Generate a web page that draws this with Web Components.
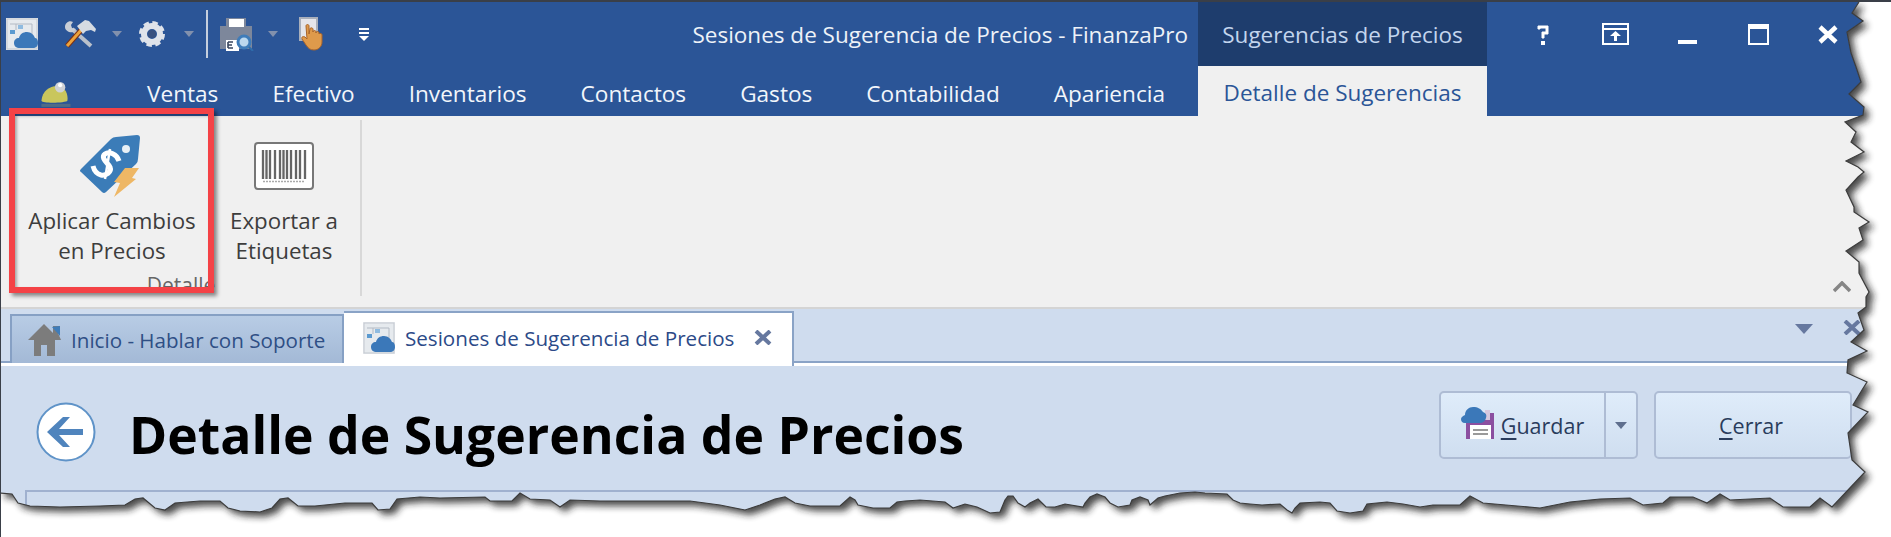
<!DOCTYPE html>
<html lang="es">
<head>
<meta charset="utf-8">
<title>Detalle de Sugerencia de Precios</title>
<style>
  html, body { margin: 0; height: 100%; background: #fff; overflow: hidden; }
  body { font-family: "Open Sans", "Liberation Sans", sans-serif; }
  #page { position: relative; width: 1891px; height: 537px; overflow: hidden; display: flex; flex-direction: column; border-left: 1px solid #3a3f48; border-top: 2px solid #3a3f48; box-sizing: border-box; }
</style>
</head>
<body>
<div id="page">
  <title-bar></title-bar>
  <ribbon-panel>
    <ribbon-button icon="tag" style="width:190px">Aplicar Cambios<br>en Precios</ribbon-button>
    <ribbon-button icon="barcode" style="width:130px">Exportar a<br>Etiquetas</ribbon-button>
  </ribbon-panel>
  <doc-tabs></doc-tabs>
  <detail-header heading="Detalle de Sugerencia de Precios"></detail-header>
  <callout-frame></callout-frame>
  <torn-edge></torn-edge>
</div>

<script>
// inline icons, shared by the components below
const CLOUD = `<path d="M14 30c-4 0-6-2-6-5s2-5 5-5c1-4 4-6 8-6s7 3 8 6c2 0 3 2 3 5s-2 5-5 5z" fill="#3b78b9"/>`;
const APP_ICON = `<svg width="32" height="32" viewBox="0 0 32 32">
  <rect width="32" height="32" fill="#e6eaee"/><rect x="1" y="1" width="30" height="30" fill="none" stroke="#c3c8cf"/>
  <path d="M4 6h22v12M10 6v6" fill="none" stroke="#b3bac4"/>
  <rect x="4" y="12" width="5" height="4" fill="#5b9ad0"/><rect x="12" y="7" width="5" height="4" fill="#8fbbe0"/>
  ${CLOUD}</svg>`;

const ICONS = {
  app: APP_ICON,
  tools: `<svg width="32" height="28" viewBox="0 0 32 28">
    <path d="M8 9 27 26" stroke="#b9c0cb" stroke-width="4"/>
    <path d="M9 2C5 0 1 3 1 7c0 4 5 6 8 5l3-3-4-1-1-3z" fill="#c9ced6"/>
    <path d="M3 26 19 8" stroke="#7a2f16" stroke-width="5"/><path d="M3 26 19 8" stroke="#eda33b" stroke-width="3"/>
    <path d="M13 6 21 0l4 1 7 8-1 3-4-2-5 1-3 3z" fill="#d6dbe2"/></svg>`,
  gear: `<svg width="28" height="28" viewBox="0 0 28 28">
    <circle cx="14" cy="14" r="10.5" fill="none" stroke="#dfe3ea" stroke-width="5" stroke-dasharray="5 3.25"/>
    <circle cx="14" cy="14" r="8" fill="none" stroke="#dfe3ea" stroke-width="6"/>
    <circle cx="14" cy="14" r="4" fill="#39517f"/></svg>`,
  printer: `<svg width="34" height="34" viewBox="0 0 34 34">
    <rect y="9" width="32" height="23" fill="#7d879b"/><rect x="6" y="1" width="20" height="12" fill="#7d879b"/>
    <rect x="9" y="2" width="15" height="8" fill="#fff"/>
    <rect x="6" y="23" width="13" height="11" fill="#fff"/>
    <path d="M8 25h5M8 28h4M8 31h5M8 25v6" stroke="#39465e" stroke-width="1.6" fill="none"/>
    <circle cx="24" cy="25" r="6" fill="#bcd8ee" stroke="#3f7cb9" stroke-width="3"/><path d="m29 30 4 4" stroke="#2f6cab" stroke-width="2"/></svg>`,
  hand: `<svg width="28" height="34" viewBox="0 0 28 34">
    <rect x="1" y="1" width="17" height="22" fill="#e5e5ea" stroke="#a9afbb" stroke-width="2"/>
    <path d="M7 9c0-2 3-2 3 0v8l1-5c0-2 3-1 3 0v3c0-2 3-2 3 0v1c0-2 3-2 3 0v1c0-1 3-1 3 1v7c0 4-3 8-8 8-4 0-6-2-8-5l-4-6c-1-2 1-3 3-2l2 2z" fill="#df9a4b" stroke="#a9642a"/></svg>`,
  ball: `<svg width="34" height="27" viewBox="0 0 32 26">
    <path d="M1 19C2 9 10 4 18 5c6 1 9 8 8 14-1 2-24 3-25 0z" fill="#c9c65c"/>
    <rect x="1" y="22" width="28" height="3" fill="#6f7d7a" opacity=".55"/>
    <circle cx="19" cy="6" r="5" fill="#cfd2d6"/><circle cx="19" cy="4" r="2" fill="#fff"/></svg>`,
  tag: `<svg width="80" height="80" viewBox="-5 6 80 80">
    <path d="M4 49 34 19q2-2 5-2l21-2q3 0 3 3l-2 21q0 3-2 5L29 72q-2 2-4 0L4 52q-2-1 0-3z" fill="#3b7cb8"/>
    <circle cx="49" cy="29" r="4" fill="#e8f0f6"/>
    <path d="M42 41C40 34 32 31 28 34 23 38 31 43 33 47 35 52 29 56 24 55 20 54 17 50 16 46" fill="none" stroke="#fff" stroke-width="5"/>
    <path d="M33 29 28 59" stroke="#fff" stroke-width="2.500"/>
    <path d="M48 48h14l-7 10 4 1-22 18 6-14-6-1z" fill="#eeb765"/></svg>`,
  barcode: `<svg width="60" height="48" viewBox="0 0 60 48">
    <rect x="1" y="1" width="58" height="46" rx="3" fill="#fff" stroke="#777" stroke-width="2"/>
    <path d="M9 8v29M12.500 8v29M16 8v29M21 8v29M26 8v29M29.500 8v29M33 8v29M37 8v29M42 8v29M46 8v29M51 8v29" stroke="#666" stroke-width="2.300"/>
    <path d="M9 39.500h42" stroke="#aaa" stroke-width="1.500" stroke-dasharray="2 1"/></svg>`,
  home: `<svg width="33" height="32" viewBox="0 0 33 32">
    <path d="M0 16 16 0l9 9V2h7v7l-2 0 3 7h-6v16h-8V21h-6v11H6V16z" fill="#7c7c7c"/>
    <path d="M24 3l8-1v10z" fill="#3f7cb9"/></svg>`,
  back: `<svg width="60" height="60" viewBox="0 0 60 60">
    <circle cx="30" cy="30" r="28.500" fill="#fff" stroke="#5f93c8" stroke-width="2"/>
    <path d="M27 15 11 30l16 15h7L23 33h24v-6H23l11-12z" fill="#4f84bd"/></svg>`,
  save: `<svg width="34" height="34" viewBox="0 0 34 34">
    <path d="M5 8h28v26H5z" fill="#8b4fa0"/><rect x="9" y="20" width="21" height="14" fill="#fff"/>
    <path d="M12 25h15M12 29h15" stroke="#9a9a9a" stroke-width="2"/>
    <path d="M24 5h5v10h-5z" fill="#d6c7de"/>
    <path d="M4 18c-3 0-4-2-4-4s2-3 4-4c0-5 4-8 8-8 5 0 8 2 10 5 3 1 4 3 3 6s-2 4-5 5z" fill="#3b78b9"/></svg>`
};

class TitleBar extends HTMLElement {
  constructor() {
    super();
    this.attachShadow({ mode: "open" });
  }

  connectedCallback() {
    const tabs = ["Ventas", "Efectivo", "Inventarios", "Contactos", "Gastos", "Contabilidad", "Apariencia"];
    this.shadowRoot.innerHTML = `
      <style>
        :host { display: block; flex: none; height: 114px; background: #2b5597; color: #fff; font-size: 22.5px; }
        .row { display: flex; align-items: center; }
        .top { height: 64px; padding-left: 5px; }
        .top svg { flex: none; }
        .arrow { width: 0; height: 0; border: 5px solid transparent; border-top: 6px solid #8291ad; border-bottom: 0; }
        .sep { width: 2px; height: 48px; background: #c5cfde; }
        .qat { display: flex; flex-direction: column; align-items: center; gap: 2px; width: 12px; }
        .qat i { display: block; width: 10px; height: 2px; background: #fff; }
        .qat b { width: 0; height: 0; border: 5px solid transparent; border-top: 5px solid #fff; border-bottom: 0; }
        .caption { margin-left: auto; margin-right: 10px; white-space: nowrap; color: #eef2f8; }
        .context { width: 289px; height: 64px; background: #1e3d6d; color: #c3d5ee; display: flex; align-items: center; justify-content: center; }
        .win { width: 404px; height: 64px; display: flex; align-items: center; }
        .bottom { height: 50px; padding-left: 39px; }
        .ball { display: flex; margin-right: 73px; margin-top: 6px; }
        .tabs { display: flex; gap: 54px; margin-top: 4px; font-size: 22.6px; color: #f2f6fb; white-space: nowrap; }
        .selected { flex: none; margin-left: auto; margin-right: 404px; width: 289px; height: 50px; padding-top: 3px; box-sizing: border-box; background: #f0f0f0; color: #2b5597; display: flex; align-items: center; justify-content: center; }
      </style>
      <div class="row top">
        ${ICONS.app}
        <span style="margin-left:26px;display:flex">${ICONS.tools}</span>
        <i class="arrow" style="margin-left:16px"></i>
        <span style="margin-left:16px;display:flex">${ICONS.gear}</span>
        <i class="arrow" style="margin-left:18px"></i>
        <i class="sep" style="margin-left:12px"></i>
        <span style="margin-left:12px;display:flex">${ICONS.printer}</span>
        <i class="arrow" style="margin-left:14px"></i>
        <span style="margin-left:21px;display:flex">${ICONS.hand}</span>
        <span class="qat" style="margin-left:31px"><i></i><i></i><b></b></span>
        <span class="caption">Sesiones de Sugerencia de Precios - FinanzaPro</span>
        <span class="context">Sugerencias de Precios</span>
        <span class="win">
          <svg style="margin-left:49px" width="14" height="22" viewBox="0 0 14 22"><path d="M2 6V3h10v8H8v4H6V9h4V5H4v1z" fill="#fff" stroke="#fff"/><rect x="5" y="18" width="4" height="4" fill="#fff"/></svg>
          <svg style="margin-left:52px" width="27" height="22" viewBox="0 0 27 22"><path d="M1 1h25v20H1zM1 6h25" fill="none" stroke="#fff" stroke-width="2"/><path d="M13.500 8 8 13h4v5h3v-5h4z" fill="#fff"/></svg>
          <svg style="margin-left:49px;margin-top:16px" width="19" height="4"><rect width="19" height="4" fill="#fff"/></svg>
          <svg style="margin-left:51px" width="21" height="21" viewBox="0 0 21 21"><path d="M1 1h19v19H1z" fill="none" stroke="#fff" stroke-width="2"/><rect width="21" height="5" fill="#fff"/></svg>
          <svg style="margin-left:49px" width="20" height="19" viewBox="0 0 20 19"><path d="m2 2 16 15M18 2 2 17" stroke="#fff" stroke-width="4.500"/></svg>
        </span>
      </div>
      <div class="row bottom">
        <span class="ball">${ICONS.ball}</span>
        <div class="tabs">${tabs.map((t) => `<span>${t}</span>`).join("")}</div>
        <span class="selected">Detalle de Sugerencias</span>
      </div>
    `;
  }
}

class RibbonButton extends HTMLElement {
  constructor() {
    super();
    this.attachShadow({ mode: "open" });
  }

  connectedCallback() {
    this.shadowRoot.innerHTML = `
      <style>
        :host { display: flex; flex-direction: column; align-items: center; color: #3d3d3d; font-size: 22.3px; line-height: 30px; text-align: center; white-space: nowrap; }
        .icon { height: 80px; display: flex; align-items: center; justify-content: center; }
      </style>
      <div class="icon">${ICONS[this.getAttribute("icon")]}</div>
      <div><slot></slot></div>
    `;
  }
}

class RibbonPanel extends HTMLElement {
  constructor() {
    super();
    this.attachShadow({ mode: "open" });
  }

  connectedCallback() {
    this.shadowRoot.innerHTML = `
      <style>
        :host { display: flex; flex: none; height: 191px; background: #f0f0f0; border-bottom: 2px solid #d4d4d4; box-sizing: content-box; }
        .group { width: 344px; margin: 4px 0 11px 14px; padding-right: 1px; border-right: 2px solid #d8d8d8; display: flex; flex-direction: column; }
        .buttons { display: flex; gap: 12px; padding-left: 2px; flex: 1; margin-top: 6px; }
        .label { text-align: center; padding-right: 12px; color: #666; font-size: 21px; line-height: 22px; }
        .collapse { margin-left: auto; margin-right: 40px; align-self: flex-end; margin-bottom: 14px; }
      </style>
      <div class="group">
        <div class="buttons"><slot></slot></div>
        <div class="label">Detalle</div>
      </div>
      <svg class="collapse" width="18" height="12" viewBox="0 0 18 12"><path d="m1 10 8-8 8 8" fill="none" stroke="#868686" stroke-width="3.500"/></svg>
    `;
  }
}

class DocTabs extends HTMLElement {
  constructor() {
    super();
    this.attachShadow({ mode: "open" });
  }

  connectedCallback() {
    this.shadowRoot.innerHTML = `
      <style>
        :host { display: flex; flex: none; height: 54px; padding-left: 9px; align-items: flex-end; background: #cfdcee; border-bottom: 3px solid #fff; box-shadow: inset 0 -2px 0 #8aa3c6; font-size: 20.6px; }
        .tab { display: flex; align-items: center; box-sizing: border-box; white-space: nowrap; }
        .off { width: 334px; height: 49px; padding-left: 16px; gap: 10px; background: linear-gradient(#b8cce5, #a3b9d6); border: solid #86a0c4; border-width: 2px 2px 0 2px; color: #2f4f85; }
        .on { width: 450px; height: 55px; margin-bottom: -3px; padding: 0 0 4px 19px; gap: 10px; background: #fff; border: solid #8aa3c6; border-width: 2px 2px 0 0; color: #2c4a88; }
        .close { margin-left: 10px; }
        .tools { margin-left: auto; align-self: flex-start; display: flex; margin-top: 15px; margin-right: 30px; }
      </style>
      <div class="tab off">${ICONS.home}<span>Inicio - Hablar con Soporte</span></div>
      <div class="tab on">${ICONS.app}<span>Sesiones de Sugerencia de Precios</span>
        <svg class="close" width="18" height="15" viewBox="0 0 18 15"><path d="m2 1 14 13M16 1 2 14" stroke="#66789f" stroke-width="4"/></svg></div>
      <div class="tools">
        <svg width="18" height="10" viewBox="0 0 18 10"><path d="M0 0h18l-9 10z" fill="#66789f"/></svg>
        <svg style="margin-left:30px;margin-top:-4px" width="18" height="15" viewBox="0 0 18 15"><path d="m2 1 14 13M16 1 2 14" stroke="#66789f" stroke-width="4"/></svg>
      </div>
    `;
  }
}

class ActionButton extends HTMLElement {
  constructor() {
    super();
    this.attachShadow({ mode: "open" });
  }

  connectedCallback() {
    const split = this.hasAttribute("split");
    this.shadowRoot.innerHTML = `
      <style>
        :host { display: flex; box-sizing: border-box; height: 68px; border: 2px solid #aebcd4; border-radius: 5px; background: linear-gradient(#dfecfa, #cfdef0); color: #2a3c5c; font-size: 21.500px; }
        .main { flex: 1; display: flex; align-items: center; justify-content: center; gap: 6px; padding-right: ${split ? 0 : 4}px; }
        .main svg { margin-top: -6px; }
        .drop { width: 30px; border-left: 2px solid #aebcd4; display: flex; align-items: center; justify-content: center; }
        .drop i { width: 0; height: 0; border: 6px solid transparent; border-top: 7px solid #5f6f8e; border-bottom: 0; }
        ::slotted(u) { text-underline-offset: 4px; text-decoration-thickness: 2px; }
      </style>
      <div class="main">${split ? ICONS.save : ""}<span><slot></slot></span></div>
      ${split ? `<div class="drop"><i></i></div>` : ""}
    `;
  }
}

class DetailHeader extends HTMLElement {
  constructor() {
    super();
    this.attachShadow({ mode: "open" });
  }

  connectedCallback() {
    this.shadowRoot.innerHTML = `
      <style>
        :host { display: flex; flex-direction: column; flex: 1; background: #cfdcee; }
        .head { display: flex; align-items: center; height: 124px; padding-left: 35px; }
        .head > svg { margin-top: 7px; }
        h1 { margin: 11px 0 0 33px; font-size: 51.700px; font-weight: 700; color: #000; white-space: nowrap; }
        .actions { margin-left: auto; margin-right: 39px; margin-top: -6px; display: flex; gap: 16px; }
        .panel { flex: 1; margin-left: 24px; border: solid #a0b1cf; border-width: 2px 0 0 2px; }
      </style>
      <div class="head">
        ${ICONS.back}
        <h1>${this.getAttribute("heading")}</h1>
        <div class="actions">
          <action-button split style="width:199px"><u>G</u>uardar</action-button>
          <action-button style="width:198px"><u>C</u>errar</action-button>
        </div>
      </div>
      <div class="panel"></div>
    `;
  }
}

// red annotation drawn over the ribbon
class CalloutFrame extends HTMLElement {
  constructor() {
    super();
    this.attachShadow({ mode: "open" });
  }

  connectedCallback() {
    this.shadowRoot.innerHTML = `
      <style>
        :host { position: absolute; left: 8px; top: 106px; width: 205px; height: 185px; box-sizing: border-box; border: 6px solid #f44246; box-shadow: 3px 3px 4px rgba(0,0,0,.45), inset 2px 2px 3px rgba(0,0,0,.3); }
      </style>
    `;
  }
}

// torn paper effect on the right and bottom of the screenshot
class TornEdge extends HTMLElement {
  constructor() {
    super();
    this.attachShadow({ mode: "open" });
  }

  connectedCallback() {
    const right = [[1859,2],[1852,13],[1863,21],[1847,32],[1851,53],[1856,67],[1861,82],[1849,94],[1864,107],[1863,115],[1845,122],[1856,132],[1851,142],[1864,152],[1846,161],[1858,167],[1864,172],[1858,177],[1846,190],[1854,207],[1854,212],[1869,222],[1859,228],[1863,240],[1846,251],[1859,262],[1859,273],[1869,292],[1866,297],[1866,307],[1858,313],[1864,330],[1851,342],[1867,351],[1848,360],[1847,373],[1867,382],[1862,390],[1853,405],[1868,412],[1848,433],[1852,460],[1865,472],[1832,507]];
    const bottom = [[1820,498],[1810,507],[1783,507],[1770,498],[1730,500],[1720,494],[1707,503],[1693,497],[1670,497],[1663,503],[1643,505],[1630,498],[1600,499],[1570,502],[1540,508],[1483,503],[1470,496],[1460,505],[1433,505],[1420,507],[1403,504],[1387,502],[1367,504],[1363,511],[1350,513],[1337,511],[1330,503],[1320,502],[1300,503],[1295,508],[1292,513],[1287,510],[1280,504],[1262,505],[1250,504],[1240,503],[1233,500],[1227,494],[1205,493],[1195,492],[1180,493],[1165,496],[1158,498],[1150,505],[1148,500],[1140,497],[1132,500],[1130,505],[1118,507],[1110,503],[1105,497],[1097,494],[1090,497],[1085,503],[1083,507],[1065,504],[1055,507],[1046,507],[1042,503],[1038,499],[1030,503],[1025,507],[1018,503],[1013,496],[1008,496],[1005,500],[1000,512],[990,513],[977,507],[965,504],[953,508],[945,502],[920,500],[905,501],[897,502],[890,508],[873,508],[858,505],[855,500],[850,497],[840,506],[810,506],[795,503],[785,497],[775,499],[760,505],[745,510],[720,505],[690,501],[650,501],[600,501],[570,500],[560,507],[550,500],[530,499],[520,493],[512,501],[490,501],[485,497],[440,498],[420,497],[397,499],[390,509],[378,510],[372,503],[345,503],[315,506],[298,506],[288,498],[280,499],[272,508],[260,512],[240,511],[228,508],[220,501],[200,501],[175,503],[165,510],[155,508],[143,498],[135,499],[125,505],[100,506],[60,507],[30,506],[18,503],[12,494],[0,493]];
    const edge = right.concat(bottom).map((p) => p.join(",")).join(" ");
    const hole = `M0 0L${edge.replace(/ /g, "L")}Z`;
    this.shadowRoot.innerHTML = `
      <style>
        :host { position: absolute; left: -1px; top: -2px; width: 1891px; height: 537px; pointer-events: none; }
        svg { display: block; }
      </style>
      <svg width="1891" height="537" viewBox="0 0 1891 537">
        <defs>
          <clipPath id="outside"><path clip-rule="evenodd" d="M0 0H1891V537H0Z${hole}"/></clipPath>
          <filter id="blur" x="-5%" y="-5%" width="110%" height="110%"><feGaussianBlur stdDeviation="3.500"/></filter>
        </defs>
        <path fill-rule="evenodd" fill="#fff" d="M0 0H1891V537H0Z${hole}"/>
        <g clip-path="url(#outside)"><path d="${hole}" fill="#1f1f1f" opacity=".8" filter="url(#blur)" transform="translate(5 5)"/></g>
        <polyline points="${edge}" fill="none" stroke="#3c3c3c" stroke-width="1.200"/>
      </svg>
    `;
  }
}

customElements.define("title-bar", TitleBar);
customElements.define("ribbon-button", RibbonButton);
customElements.define("ribbon-panel", RibbonPanel);
customElements.define("doc-tabs", DocTabs);
customElements.define("action-button", ActionButton);
customElements.define("detail-header", DetailHeader);
customElements.define("callout-frame", CalloutFrame);
customElements.define("torn-edge", TornEdge);
</script>
</body>
</html>
